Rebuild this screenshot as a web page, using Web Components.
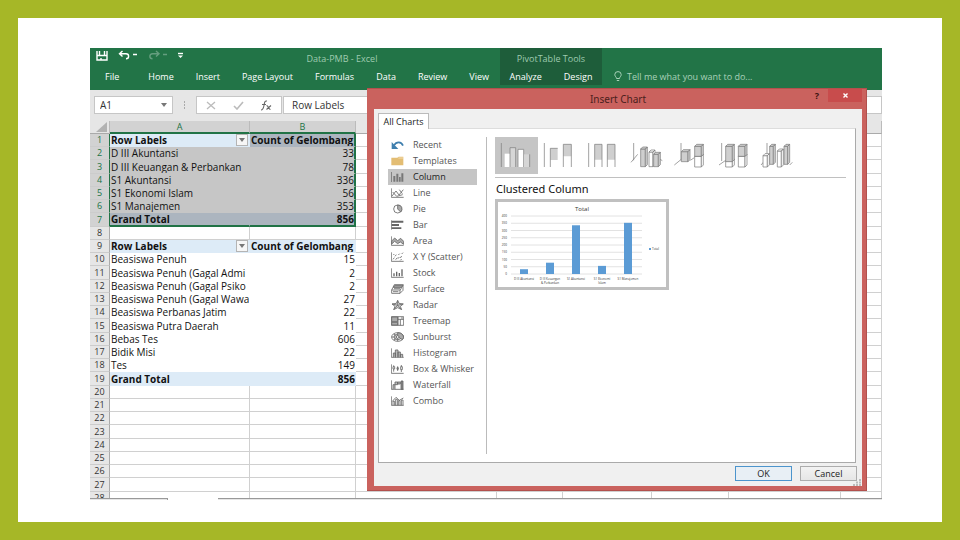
<!DOCTYPE html>
<html lang="en">
<head>
<meta charset="utf-8">
<title>Data-PMB - Excel</title>
<style>
    body {
        margin: 0;
        font-family: "Open Sans", "Noto Sans", sans-serif;
    }
</style>
</head>
<body>
<slide-frame>
    <excel-window>
        <excel-ribbon slot="ribbon"></excel-ribbon>
        <formula-bar slot="formula" cell="A1" value="Row Labels"></formula-bar>
        <work-sheet slot="sheet"></work-sheet>
        <chart-dialog slot="dialog" heading="Insert Chart">
            <chart-kinds slot="kinds"></chart-kinds>
            <chart-subtypes slot="main"></chart-subtypes>
            <chart-preview slot="main" heading="Clustered Column"></chart-preview>
        </chart-dialog>
    </excel-window>
</slide-frame>

<script>
class SlideFrame extends HTMLElement {
    constructor() {
        super();
        this.attachShadow({mode: 'open'});
        this.shadowRoot.innerHTML = `
            <style>
                :host {
                    display: flex;
                    box-sizing: border-box;
                    height: 100vh;
                    border: 18px solid #a6b727;
                    padding: 30px 60px 22px 72px;
                    background: #fff;
                }
                ::slotted(*) { flex: 1; min-width: 0; }
            </style>
            <slot></slot>
        `;
    }
}

class ExcelWindow extends HTMLElement {
    constructor() {
        super();
        this.attachShadow({mode: 'open'});
        this.shadowRoot.innerHTML = `
            <style>
                :host {
                    position: relative;
                    display: flex;
                    flex-direction: column;
                    overflow: hidden;
                    background: #fff;
                }
                ::slotted([slot="sheet"]) { flex: 1; min-height: 0; }
                ::slotted([slot="dialog"]) {
                    position: absolute;
                    inset: 40px 15px 9px 277px;
                }
                footer { display: flex; flex-shrink: 0; height: 2px; }
                footer div {
                    box-sizing: border-box;
                    border-top: 1px solid #999;
                    background: #e6e6e6;
                }
                footer .left { width: 78px; border-right: 1px solid #999; }
                footer .active { width: 50px; border-color: #fff; background: #fff; }
                footer .rest { flex: 1; }
            </style>
            <slot name="ribbon"></slot>
            <slot name="formula"></slot>
            <slot name="sheet"></slot>
            <footer><div class="left"></div><div class="active"></div><div class="rest"></div></footer>
            <slot name="dialog"></slot>
        `;
    }
}

class ExcelRibbon extends HTMLElement {
    constructor() {
        super();
        this.attachShadow({mode: 'open'});
        const links = (names) => names.map((n) => `<a href="#">${n}</a>`).join('');
        this.shadowRoot.innerHTML = `
            <style>
                :host {
                    display: flex;
                    height: 42px;
                    background: #227447;
                    color: #fff;
                    font-size: 9px;
                    line-height: 12px;
                }
                button {
                    all: unset;
                    display: flex;
                }
                svg { display: block; fill: none; stroke: #fff; stroke-width: 1.4; }
                .main { width: 410px; }
                .top { display: flex; height: 23px; }
                .qat {
                    display: flex;
                    gap: 10px;
                    width: 88px;
                    padding: 2px 0 0 6px;
                }
                .redo { opacity: 0.3; }
                .title {
                    flex: 1;
                    padding-top: 5px;
                    text-align: center;
                    color: #9fcbb0;
                }
                nav { display: flex; gap: 22px; }
                a { color: inherit; text-decoration: none; white-space: nowrap; }
                .main nav { padding-left: 15px; }
                .main a:first-child { margin-right: 7px; }
                .context {
                    display: flex;
                    flex-direction: column;
                    align-items: center;
                    width: 102px;
                    height: 37px;
                    background: #1e5d3a;
                }
                .context span { height: 18px; padding-top: 5px; color: #9fcbb0; }
                .tell {
                    display: flex;
                    gap: 5px;
                    padding: 23px 0 0 12px;
                    color: #a9d1b9;
                }
                .tell svg { stroke: #a9d1b9; stroke-width: 1; }
            </style>
            <div class="main">
                <div class="top">
                    <div class="qat">
                        <button aria-label="Save"><svg width="12" height="11" viewBox="0 0 12 11"><path d="M1 1v9h10V1M1 5.500h10M3.500 1v4M8.500 1v4M5 8v2"/></svg></button>
                        <button aria-label="Undo"><svg width="20" height="11" viewBox="0 0 20 11"><path d="M4.500 1L1.500 3.800l3 2.800M1.500 3.800H8c3.500 0 3.500 5 0 5M15 4.500h4"/></svg></button>
                        <button aria-label="Redo" class="redo"><svg width="20" height="11" viewBox="0 0 20 11"><path d="M8 1l3 2.800-3 2.800M11 3.800H4.500c-3.500 0-3.500 5 0 5M15 4.500h4"/></svg></button>
                        <button aria-label="Customize"><svg width="5" height="11" viewBox="0 0 5 11"><path d="M0 3.500h5"/><path d="M0 5.500h5l-2.500 2.500z" fill="#fff" stroke="none"/></svg></button>
                    </div>
                    <div class="title">Data-PMB - Excel</div>
                </div>
                <nav>${links(['File', 'Home', 'Insert', 'Page Layout', 'Formulas', 'Data', 'Review', 'View'])}</nav>
            </div>
            <div class="context">
                <span>PivotTable Tools</span>
                <nav>${links(['Analyze', 'Design'])}</nav>
            </div>
            <div class="tell">
                <svg width="8" height="11" viewBox="0 0 8 11"><path d="M2.500 7.500C2.500 6 .800 5.500 .800 3.600a3.200 3 0 0 1 6.400 0C7.200 5.500 5.500 6 5.500 7.500zM2.800 9.500h2.400"/></svg>
                <span>Tell me what you want to do...</span>
            </div>
        `;
    }
}

class FormulaBar extends HTMLElement {
    constructor() {
        super();
        this.attachShadow({mode: 'open'});
        this.shadowRoot.innerHTML = `
            <style>
                :host {
                    display: flex;
                    box-sizing: border-box;
                    height: 31px;
                    padding: 6px 0 7px 4px;
                    background: #e6e6e6;
                }
                .box {
                    display: flex;
                    align-items: center;
                    box-sizing: border-box;
                    background: #fff;
                    border: 1px solid #c6c6c6;
                }
                .name { width: 79px; padding-right: 5px; }
                input {
                    all: unset;
                    flex: 1;
                    min-width: 0;
                    padding-left: 5px;
                    font-size: 10px;
                    line-height: 14px;
                    color: #333;
                }
                .dots { align-self: center; margin: 0 9px 0 10px; }
                .buttons { width: 86px; justify-content: space-between; padding: 0 9px; }
                .buttons button { all: unset; display: flex; }
                .formula { flex: 1; margin-left: 1px; padding-left: 3px; }
                svg { display: block; }
            </style>
            <div class="box name">
                <input aria-label="Name box">
                <svg width="6" height="4" viewBox="0 0 6 4"><path d="M0 0h6L3 4z" fill="#777"/></svg>
            </div>
            <svg class="dots" width="4" height="9" viewBox="0 0 4 9"><path d="M1 0h1v2H1zM1 3h1v2H1zM1 6h1v2H1z" fill="#aaa"/></svg>
            <div class="box buttons">
                <button aria-label="Cancel"><svg width="10" height="9" viewBox="0 0 10 9"><path d="M1 1l8 7M9 1L1 8" stroke="#bbb" stroke-width="1.300"/></svg></button>
                <button aria-label="Enter"><svg width="11" height="9" viewBox="0 0 11 9"><path d="M1 5l3 3 6-7" fill="none" stroke="#bbb" stroke-width="1.600"/></svg></button>
                <button aria-label="Insert function"><svg width="12" height="11" viewBox="0 0 12 11"><path d="M7 1C4.500 .500 4.500 3 4 5.500S3 10 1 10M2 4.500h4M6.500 5.500c2 0 2 4 4 4M11 5.500L6.500 9.500" fill="none" stroke="#666" stroke-width="1.100"/></svg></button>
            </div>
            <div class="box formula"><input aria-label="Formula"></div>
        `;
        const [name, formula] = this.shadowRoot.querySelectorAll("input");
        name.value = this.getAttribute("cell");
        formula.value = this.getAttribute("value");
    }
}

const ROWS = [
    ['Row Labels', 'Count of Gelombang'],
    ['D III Akuntansi', 33],
    ['D III Keuangan & Perbankan', 78],
    ['S1 Akuntansi', 336],
    ['S1 Ekonomi Islam', 56],
    ['S1 Manajemen', 353],
    ['Grand Total', 856],
    [],
    ['Row Labels', 'Count of Gelombang'],
    ['Beasiswa Penuh', 15],
    ['Beasiswa Penuh (Gagal Admi', 2],
    ['Beasiswa Penuh (Gagal Psiko', 2],
    ['Beasiswa Penuh (Gagal Wawa', 27],
    ['Beasiswa Perbanas Jatim', 22],
    ['Beasiswa Putra Daerah', 11],
    ['Bebas Tes', 606],
    ['Bidik Misi', 22],
    ['Tes', 149],
    ['Grand Total', 856],
];

class WorkSheet extends HTMLElement {
    constructor() {
        super();
        this.attachShadow({mode: 'open'});
        const widths = [20, 140, 106, 141, 66, 89, 77, 112];
        this.shadowRoot.innerHTML = `
            <style>
                :host { display: block; overflow: hidden; }
                table {
                    table-layout: fixed;
                    width: 100%;
                    border-collapse: separate;
                    border-spacing: 0;
                    font-size: 10px;
                    line-height: 12px;
                    color: #111;
                }
                tr { height: 13px; }
                tbody tr:nth-child(4n+3) { height: 14px; }
                th, td {
                    box-sizing: border-box;
                    padding: 0 1px;
                    border-right: 1px solid #d0d0d0;
                    border-bottom: 1px solid #d0d0d0;
                    white-space: nowrap;
                    text-align: left;
                }
                td { overflow: hidden; }
                th {
                    padding: 0;
                    background: #e6e6e6;
                    border-right-color: #aaa;
                    border-bottom-color: #ccc;
                    font-size: 9px;
                    font-weight: normal;
                    text-align: center;
                    color: #333;
                }
                .num { padding-right: 0; text-align: right; }
                .on { background: #d2d2d2; color: #217346; }
                thead { line-height: 11px; }
                thead th { border-right-color: #bbb; border-bottom-color: #aaa; }
                thead .on { border-bottom: 2px solid #217346; }
                tbody th.on { border-right-color: #217346; }
                .corner svg { display: block; margin-left: 6px; }
                .filled td:nth-child(-n+3) { border-color: transparent; }
                .sel td:nth-child(-n+3) { background: #c6c6c6; }
                .sel td:nth-child(3) { border-right: 2px solid #217346; }
                .sel.last td:nth-child(-n+3) { border-bottom: 2px solid #217346; line-height: 11px; }
                .bold td { font-weight: bold; }
                .blue td:nth-child(-n+3) { background: #ddebf7; }
                .blue.sel td:nth-child(3), .blue.last td:nth-child(-n+3) { background: #acb5bf; }
                .head { display: flex; justify-content: space-between; align-items: center; }
                .head button {
                    all: unset;
                    display: flex;
                    align-items: center;
                    justify-content: center;
                    box-sizing: border-box;
                    width: 12px;
                    height: 12px;
                    border: 1px solid #b4b4b4;
                    background: #f6f6f6;
                }
            </style>
            <table>
                <colgroup>${widths.map((w) => `<col style="width: ${w}px">`).join('')}<col></colgroup>
                <thead>
                    <tr>
                        <th class="corner"><svg width="11" height="10" viewBox="0 0 11 10"><path d="M11 0v10H0z" fill="#b2b2b2"/></svg></th>
                        <th class="on">A</th><th class="on">B</th>${'<th></th>'.repeat(6)}
                    </tr>
                </thead>
                <tbody></tbody>
            </table>
        `;
        const body = this.shadowRoot.querySelector("tbody");
        for (let i = 0; i < 28; i++) {
            const [label, count] = ROWS[i] || [];
            const tr = document.createElement("tr");
            const head = label === 'Row Labels';
            if (label) tr.classList.add("filled");
            if (head || label === 'Grand Total') tr.classList.add("bold", "blue");
            if (i < 7) tr.classList.add("sel");
            if (i === 6) tr.classList.add("last");
            tr.innerHTML = `
                <th class="${i < 7 ? 'on' : ''}">${i + 1}</th>
                <td></td>
                <td class="${head ? '' : 'num'}">${count ?? ''}</td>
                ${'<td></td>'.repeat(6)}
            `;
            const cell = tr.querySelector("td");
            if (head) {
                cell.innerHTML = `
                    <div class="head">${label}
                        <button aria-label="Filter"><svg width="6" height="4" viewBox="0 0 6 4"><path d="M0 0h6L3 4z" fill="#777"/></svg></button>
                    </div>
                `;
            } else {
                cell.textContent = label || '';
            }
            body.appendChild(tr);
        }
    }
}

class ChartDialog extends HTMLElement {
    constructor() {
        super();
        this.attachShadow({mode: 'open'});
        this.shadowRoot.innerHTML = `
            <style>
                :host {
                    display: flex;
                    flex-direction: column;
                    box-sizing: border-box;
                    padding: 0 4px 4px 7px;
                    background: #ca625e;
                    border: 1px solid #b2504d;
                    border-left-width: 0;
                    font-size: 9px;
                    line-height: 12px;
                    color: #222;
                }
                button { all: unset; box-sizing: border-box; text-align: center; }
                header { display: flex; height: 20px; }
                h1 {
                    flex: 1;
                    margin: 0;
                    padding: 3px 0 0 56px;
                    font-family: "Noto Sans", sans-serif;
                    font-size: 10px;
                    line-height: 14px;
                    font-weight: normal;
                    text-align: center;
                    color: #4a1f1d;
                }
                .help { width: 22px; height: 13px; font-weight: bold; color: #3c1211; }
                .close {
                    display: flex;
                    align-items: center;
                    justify-content: center;
                    width: 34px;
                    height: 13px;
                    background: #c84c4c;
                }
                .body {
                    flex: 1;
                    display: flex;
                    flex-direction: column;
                    padding: 4px 5px 5px 4px;
                    background: #f0f0f0;
                }
                .tab {
                    align-self: flex-start;
                    width: 51px;
                    height: 16px;
                    border: 1px solid #bbb;
                    border-bottom: 0;
                    background: #fff;
                    margin-bottom: -1px;
                    z-index: 1;
                }
                .panel {
                    flex: 1;
                    display: flex;
                    margin-right: 1px;
                    padding: 8px 9px;
                    border: 1px solid #aaa;
                    border-top-color: #ddd;
                    background: #fff;
                }
                .kinds {
                    width: 98px;
                    border-right: 1px solid #bbb;
                }
                .content { flex: 1; min-width: 0; padding-left: 8px; }
                .actions {
                    display: flex;
                    justify-content: flex-end;
                    gap: 8px;
                    padding-top: 3px;
                }
                .actions button {
                    width: 57px;
                    height: 15px;
                    border: 1px solid #acacac;
                    background: linear-gradient(#f2f2f2, #e6e6e6);
                }
                .actions .ok { border: 1px solid #4c94cc; background: #e8eff5; }
                .grip { position: absolute; right: 5px; bottom: 4px; }
            </style>
            <header>
                <h1></h1>
                <button class="help">?</button>
                <button class="close" aria-label="Close"><svg width="5" height="5" viewBox="0 0 5 5"><path d="M.500 .500l4 4M4.500 .500l-4 4" stroke="#fff" stroke-width="1.400"/></svg></button>
            </header>
            <div class="body">
                <button class="tab">All Charts</button>
                <div class="panel">
                    <div class="kinds"><slot name="kinds"></slot></div>
                    <div class="content"><slot name="main"></slot></div>
                </div>
                <div class="actions">
                    <button class="ok">OK</button>
                    <button>Cancel</button>
                </div>
            </div>
            <svg class="grip" width="8" height="7" viewBox="0 0 8 7"><path d="M6 0h2v2H6zM6 2.500h2v2H6zM3 2.500h2v2H3zM6 5h2v2H6zM3 5h2v2H3zM0 5h2v2H0z" fill="#bbb"/></svg>
        `;
        this.shadowRoot.querySelector("h1").textContent = this.getAttribute("heading");
    }
}

// 39x30 grid, L is the axis shared by most of the icons
const L = '<path d="M1 1v27h37"/>';
const KINDS = [
    ['Recent', '<path d="M9 16C16 4 31 4 36 17" stroke="#3f7fae" stroke-width="5"/><path d="M2 6v21h20z" fill="#3f7fae" stroke="none"/>'],
    ['Templates', '<path d="M1 5h18l4-3h14v26H1z" fill="#e3bd73" stroke="none"/><path d="M22 6h14" stroke="#f6e3bd"/>'],
    ['Column', '<path d="M1 0v30"/><path d="M7 12h6v17H7zM16 5h6v24h-6zM24 15h5v14h-5zM31 4h6v25h-6z" fill="#777" stroke="none"/>'],
    ['Line', L + '<path d="M3 24L15 9l9 12L37 5M5 12l12 13L35 20M25 5l9 12"/>'],
    ['Pie', '<circle cx="20" cy="15" r="12"/><path d="M20 3v12l9 9A12 12 0 0 0 20 3z" fill="#aaa"/>'],
    ['Bar', '<path d="M1 1v28"/><path d="M2 2h35v6H2zM2 12h22v6H2zM2 22h29v5H2z" fill="#666" stroke="none"/>'],
    ['Area', L + '<path d="M2 15l9-9 9 8 9-7 9 9v9l-10-7-8 5-9-7-9 8z" fill="#aaa"/>'],
    ['X Y (Scatter)', L + '<path d="M6 22l4-5M12 13l4-5M14 23l5-6M21 20l4-5M22 9l4-4M28 18l4-6M32 6l4-4M28 25l4-4M7 9l3-3"/>'],
    ['Stock', L + '<path d="M9 16v9M17 11v14M25 15v10M33 4v21" stroke-width="4"/>'],
    ['Surface', '<path d="M10 2h27l-5 8H6zM6 10l-4 8h26l4-8M2 18v10h25l9-9V3M27 28V18M14 6h15M9 14h18M6 23h16"/><path d="M11 4h24l-3 5H8z" fill="#bbb"/>'],
    ['Radar', '<path d="M20 1l4 9 13 2-9 7 4 10-12-6-12 6 4-10-9-7 13-2z" fill="#ddd"/><path d="M20 2v14l16-4M20 16L4 12M20 16l11 12M20 16L9 28"/>'],
    ['Treemap', '<path d="M1 2h37v26H1z"/><path d="M2 3h18v14H2zM2 19h18v8H2z" fill="#aaa"/><path d="M21 2v26M28 10v18M21 10h17M33 3v7"/>'],
    ['Sunburst', '<ellipse cx="20" cy="15" rx="18" ry="13"/><ellipse cx="20" cy="15" rx="11" ry="8"/><path d="M20 2v12l14 9A18 13 0 0 0 20 2z" fill="#aaa"/><path d="M2 15h13M8 6l9 6M8 24l9-6M20 18v10"/><circle cx="20" cy="15" r="4" fill="#fff"/>'],
    ['Histogram', L + '<path d="M7 28V15h6v13M13 28V6h8v22M21 28V12h7v16M28 28v-9h7v9" fill="#bbb"/>'],
    ['Box & Whisker', L + '<path d="M8 4v4M6 8h5v7H6zM8 15v8M20 7v14M18 11h4v5h-4zM31 3v5M29 8h5v9h-5zM31 17v7"/>'],
    ['Waterfall', L + '<path d="M6 28V14h6v14M12 14V6h8v8zM20 6h8v6h-8z" fill="#bbb"/><path d="M30 3h6v25h-6z" fill="#888"/>'],
    ['Combo', L + '<path d="M6 28V16h5v12M14 28V10h5v18M22 28V14h5v14M31 28V12h5v16"/><path d="M3 17L15 4l10 9 12-7"/>'],
];

class ChartKinds extends HTMLElement {
    constructor() {
        super();
        this.attachShadow({mode: 'open'});
        this.shadowRoot.innerHTML = `
            <style>
                :host { display: flex; flex-direction: column; width: 89px; }
                button {
                    all: unset;
                    display: flex;
                    align-items: center;
                    gap: 9px;
                    height: 16px;
                    padding-left: 3px;
                    font-size: 9px;
                    line-height: 12px;
                    color: #555;
                    white-space: nowrap;
                }
                .selected { background: #c5c5c5; color: #222; }
                svg { width: 13px; height: 10px; fill: none; stroke: #666; stroke-width: 2.5; }
            </style>
            ${KINDS.map(([name, icon]) => `
                <button class="${name === 'Column' ? 'selected' : ''}">
                    <svg viewBox="0 0 39 30">${icon}</svg>${name.replace('&', '&amp;')}
                </button>
            `).join('')}
        `;
    }
}

// front, top and side face of a 3D column
function box(x, y, w, h, fill, side = fill) {
    return `<path d="M${x} ${y}h${w}v${h}h${-w}z" fill="${fill}"/>
        <path d="M${x} ${y}l6-6h${w}l-6 6zM${x + w} ${y}l6-6v${h}l-6 6z" fill="${side}"/>`;
}

const G = '#cfcfcf';
const W = '#fff';
const SUBTYPES = [
    ['Clustered Column', '<path d="M19 18v72"/><path d="M29 50h16v40H29z" fill="#fff" stroke="none"/><path d="M45 90V32h17v58" fill="#d6d6d6"/><path d="M69 90V37h17v53" fill="#fff"/><path d="M87 52h16v38H87z" fill="#d6d6d6" stroke="none"/><path d="M104 52v38"/>'],
    ['Stacked Column', '<path d="M16 18v72"/><path d="M34 34h22v35H34zM73 22h24v36H73z" fill="#cfcfcf" stroke="none"/><path d="M34 90V34h22M73 90V22h24v68"/>'],
    ['100% Stacked Column', '<path d="M17 18v72"/><path d="M35 22h22v46H35zM73 22h23v46H73z" fill="#cfcfcf" stroke="none"/><path d="M35 90V22h22v68M73 90V22h23v68"/>'],
    ['3-D Clustered Column', '<path d="M20 18v52M12 76l20-24M98 66l8 5"/>' + box(41, 36, 14, 53, G) + box(66, 45, 12, 44, W) + box(80, 52, 14, 37, G)],
    ['3-D Stacked Column', '<path d="M30 18v52M10 84l22-18M58 70l12-8"/>' + box(31, 44, 20, 30, G) + box(71, 58, 20, 32, W) + box(71, 28, 20, 30, G)],
    ['3-D 100% Stacked Column', '<path d="M20 18v54M12 84l20-14"/>' + box(32, 72, 20, 18, W) + box(32, 28, 20, 46, G) + box(70, 58, 20, 32, W) + box(70, 28, 20, 30, G)],
    ['3-D Column', '<path d="M24 18v50M6 84l14-16M92 84l8-8"/>' + box(32, 28, 11, 54, G) + box(75, 28, 11, 54, G) + box(12, 56, 13, 34, W) + box(55, 42, 12, 48, W)],
];

class ChartSubtypes extends HTMLElement {
    constructor() {
        super();
        this.attachShadow({mode: 'open'});
        this.shadowRoot.innerHTML = `
            <style>
                :host {
                    display: flex;
                    gap: 1px;
                    padding-bottom: 3px;
                    border-bottom: 1px solid #c0c0c0;
                }
                button { all: unset; display: flex; width: 43px; height: 37px; }
                .selected { background: #c5c5c5; }
                svg { width: 43px; height: 37px; fill: none; stroke: #808080; stroke-width: 2.2; }
            </style>
            ${SUBTYPES.map(([name, icon], i) => `
                <button class="${i ? '' : 'selected'}" aria-label="${name}"><svg viewBox="0 0 129 111">${icon}</svg></button>
            `).join('')}
        `;
    }
}

const BARS = [
    [33, 'D III Akuntansi'],
    [78, 'D III Keuangan', '& Perbankan'],
    [336, 'S1 Akuntansi'],
    [56, 'S1 Ekonomi', 'Islam'],
    [353, 'S1 Manajemen'],
];

class ChartPreview extends HTMLElement {
    constructor() {
        super();
        this.attachShadow({mode: 'open'});
        const base = 72;
        let grid = '';
        for (let v = 0; v <= 400; v += 50) {
            const y = base - v * 58 / 400;
            grid += `<path d="M13 ${y}h131" stroke="#e2e2e2" stroke-width="1"/><text x="9" y="${y + 1}" text-anchor="end">${v}</text>`;
        }
        const bars = BARS.map(([v, ...lines], i) => {
            const x = 26 + i * 26;
            const h = v * 58 / 400;
            return `<rect x="${x - 4}" y="${base - h}" width="8" height="${h}" fill="#5b9bd5"/>`
                + lines.map((t, n) => `<text x="${x}" y="${78 + n * 4}" text-anchor="middle">${t.replace('&', '&amp;')}</text>`).join('');
        }).join('');
        this.shadowRoot.innerHTML = `
            <style>
                :host { display: block; }
                h2 {
                    margin: 3px 0 2px 1px;
                    font-family: "Noto Sans", sans-serif;
                    font-size: 11px;
                    line-height: 16px;
                    font-weight: normal;
                    color: #111;
                }
                svg {
                    display: block;
                    box-sizing: border-box;
                    width: 174px;
                    height: 91px;
                    border: 3px solid #c0c0c0;
                    font-size: 3px;
                    fill: #333;
                }
                .title { font-size: 6px; }
            </style>
            <h2></h2>
            <svg viewBox="0 0 168 85">
                <text class="title" x="84" y="9" text-anchor="middle">Total</text>
                ${grid}${bars}
                <rect x="151" y="46" width="2" height="2" fill="#5b9bd5"/><text x="154" y="48">Total</text>
            </svg>
        `;
        this.shadowRoot.querySelector("h2").textContent = this.getAttribute("heading");
    }
}

customElements.define("slide-frame", SlideFrame);
customElements.define("excel-window", ExcelWindow);
customElements.define("excel-ribbon", ExcelRibbon);
customElements.define("formula-bar", FormulaBar);
customElements.define("work-sheet", WorkSheet);
customElements.define("chart-dialog", ChartDialog);
customElements.define("chart-kinds", ChartKinds);
customElements.define("chart-subtypes", ChartSubtypes);
customElements.define("chart-preview", ChartPreview);
</script>
</body>
</html>
